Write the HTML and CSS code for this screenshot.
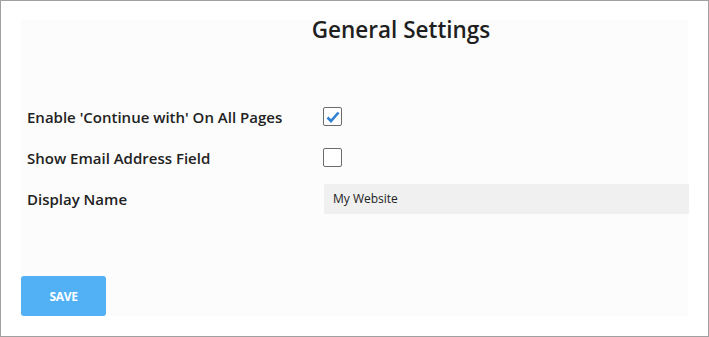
FILE: index.html
```html
<!DOCTYPE html>
<html lang="en">
<head>
  <meta charset="UTF-8">
  <title>General Settings</title>
  <link rel="stylesheet" href="styles.css">
</head>
<body>

<div class="frame">
  <div class="panel">
    <h1 class="title">General Settings</h1>

    <form class="settings">
      <div class="row">
        <label for="continue-with">Enable 'Continue with' On All Pages</label>
        <span class="box checked" id="continue-with">
          <svg width="14" height="12" viewBox="0 0 14 12"><path d="M1.5 6.5 L5 10 L12.5 1.5" fill="none" stroke="#2f7fd3" stroke-width="2.6"/></svg>
        </span>
      </div>
      <div class="row">
        <label for="show-email">Show Email Address Field</label>
        <span class="box" id="show-email"></span>
      </div>
      <div class="row">
        <label for="display-name">Display Name</label>
        <input type="text" id="display-name" value="My Website">
      </div>
    </form>

    <button type="button" class="save">SAVE</button>
  </div>
</div>

</body>
</html>
```

FILE: styles.css
```css
* {
  box-sizing: border-box;
}
body {
  margin: 0;
  font-family: "Open Sans", "Noto Sans", sans-serif;
  color: #222;
  background-color: #fff;
}
.frame {
  width: 709px;
  height: 337px;
  border: 1px solid #a0a0a0;
  padding: 19px 20px 20px 20px;
}
.panel {
  height: 296px;
  background-color: #fcfcfc;
  display: flex;
  flex-direction: column;
}
.title {
  margin: 0;
  padding: 0 0 0 93px;
  font-size: 22.5px;
  font-weight: 600;
  line-height: 24px;
  text-align: center;
  margin-top: -2px;
  color: #1f1f1f;
}
.settings {
  margin-top: 54px;
  padding-left: 6px;
}
.row {
  display: grid;
  grid-template-columns: 296px 1fr;
  align-items: center;
  height: 41px;
}
.row label {
  font-size: 15px;
  font-weight: 600;
  color: #222;
}
.box {
  width: 19px;
  height: 19px;
  border: 1px solid #6b6b6b;
  border-radius: 2px;
  background-color: #fff;
  display: flex;
  align-items: center;
  justify-content: center;
}
.row input {
  width: 100%;
  height: 30px;
  border: none;
  background-color: #f0f0f0;
  padding: 0 9px;
  font-family: inherit;
  font-size: 12px;
  color: #222;
  margin-left: 1px;
}
.save {
  margin-top: auto;
  width: 85px;
  height: 40px;
  border: none;
  border-radius: 3px;
  background-color: #52b0f5;
  color: #fff;
  font-family: inherit;
  font-size: 12px;
  font-weight: 700;
  letter-spacing: -0.3px;
  cursor: pointer;
}
```
